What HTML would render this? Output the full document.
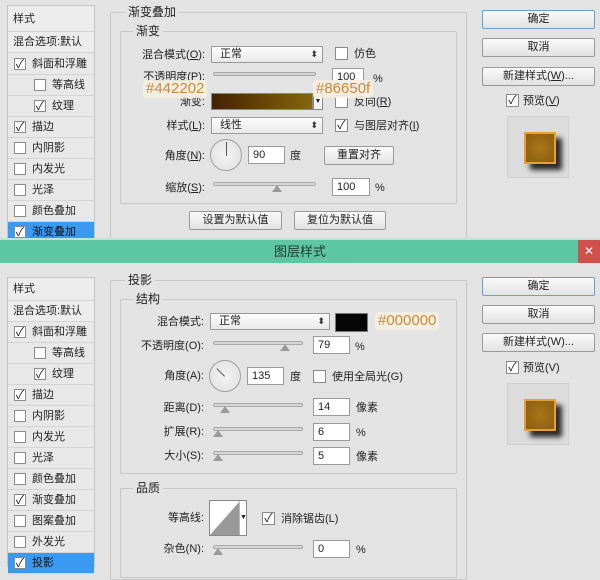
<!DOCTYPE html>
<html><head><meta charset="utf-8">
<style>
*{box-sizing:border-box;margin:0;padding:0}
body{width:600px;height:562px;overflow:hidden;background:#e3e3e3;font-family:"Liberation Sans","Noto Sans CJK SC",sans-serif;font-size:11px;color:#222;position:relative}
.a{position:absolute}
.list{position:absolute;left:7px;width:88px;background:#e8e8e8;border:1px solid #c4c4c4}
.it{position:absolute;left:0;width:86px;height:21px;line-height:21px;border-bottom:1px solid #d4d4d4;padding-left:24px;white-space:nowrap;font-size:11px}
.it.sub{padding-left:44px}
.it.hd{padding-left:5px;background:#ececec}
.it.sel{background:#3a99f0;color:#111}
.cb{position:absolute;width:12px;height:12px;border:1px solid #8a8a8a;background:#fff;top:4px;left:6px;font-size:12px;line-height:10px;text-align:center;color:#222}
.it.sub .cb{left:26px}
.fs{position:absolute;border:1px solid #c6c6c6;border-radius:2px}
.lg{position:absolute;background:#e3e3e3;padding:0 3px;font-size:12px;top:-8px;left:16px;line-height:14px}
.lbl{position:absolute;text-align:right;width:100px;font-size:11px;line-height:14px}
.sel2{position:absolute;height:17px;border:1px solid #9a9a9a;background:linear-gradient(#fdfdfd,#e8e8e8);padding-left:8px;line-height:15px;font-size:11px}
.sel2:after{content:"⬍";position:absolute;right:4px;top:0;font-size:9px;color:#333}
.inp{position:absolute;height:18px;border:1px solid #9a9a9a;background:#fff;padding-left:4px;line-height:16px;font-size:11px}
.sl{position:absolute;height:4px;border:1px solid #a8a8a8;border-radius:2px;background:#d6d6d6}
.th{position:absolute;top:2px;width:0;height:0;border-left:5px solid transparent;border-right:5px solid transparent;border-bottom:7px solid #999}
.btn{position:absolute;border:1px solid #9a9a9a;background:linear-gradient(#fafafa,#e2e2e2);text-align:center;font-size:11px;line-height:17px;border-radius:2px}
.ck{position:absolute;width:13px;height:13px;border:1px solid #8a8a8a;background:#fff;font-size:12px;line-height:11px;text-align:center}
.tx{position:absolute;font-size:11px;line-height:14px;white-space:nowrap}
.dial{position:absolute;width:32px;height:32px;border-radius:50%;border:1px solid #a0a0a0;background:radial-gradient(#f4f4f4,#dedede)}
.tag{position:absolute;background:rgba(245,238,225,.9);color:#c98a3a;font-size:15px;line-height:18px;padding:0 3px;border-radius:3px}
.prev{position:absolute;width:62px;height:62px;border:1px solid #cfcfcf;background:#dcdcdc}
.sq{position:absolute;left:16px;top:15px;width:32px;height:32px;background:radial-gradient(#a8761a,#8a5d0f);border:2px solid #e9a030;box-shadow:6px 6px 5px #2a2a2a}
</style></head><body>

<!-- TOP PANEL -->
<div class="list" style="top:5px;height:233px">
 <div class="it hd" style="top:0;height:26px;line-height:26px">样式</div>
 <div class="it hd" style="top:26px">混合选项:默认</div>
 <div class="it" style="top:48px"><span class="cb">✓</span>斜面和浮雕</div>
 <div class="it sub" style="top:69px"><span class="cb"></span>等高线</div>
 <div class="it sub" style="top:90px"><span class="cb">✓</span>纹理</div>
 <div class="it" style="top:111px"><span class="cb">✓</span>描边</div>
 <div class="it" style="top:132px"><span class="cb"></span>内阴影</div>
 <div class="it" style="top:153px"><span class="cb"></span>内发光</div>
 <div class="it" style="top:174px"><span class="cb"></span>光泽</div>
 <div class="it" style="top:195px"><span class="cb"></span>颜色叠加</div>
 <div class="it sel" style="top:216px"><span class="cb">✓</span>渐变叠加</div>
</div>

<div class="fs" style="left:110px;top:12px;width:357px;height:240px"><span class="lg" style="left:14px">渐变叠加</span></div>
<div class="fs" style="left:120px;top:31px;width:337px;height:173px"><span class="lg" style="left:12px">渐变</span></div>

<div class="lbl" style="left:105px;top:48px">混合模式(<u>O</u>):</div>
<div class="sel2" style="left:211px;top:46px;width:112px">正常</div>
<div class="ck" style="left:335px;top:47px"></div><div class="tx" style="left:354px;top:47px">仿色</div>

<div class="lbl" style="left:105px;top:70px">不透明度(P):</div>
<div class="sl" style="left:213px;top:72px;width:103px"></div>
<div class="inp" style="left:332px;top:68px;width:32px">100</div><div class="tx" style="left:373px;top:72px">%</div>

<div class="lbl" style="left:105px;top:95px">渐变:</div>
<div class="a" style="left:211px;top:93px;width:102px;height:17px;border:1px solid #888;background:linear-gradient(90deg,#442202,#86650f)"></div>
<div class="a" style="left:313px;top:93px;width:10px;height:17px;border:1px solid #888;background:#f5f5f5;font-size:7px;text-align:center;line-height:15px">▼</div>
<div class="ck" style="left:335px;top:95px"></div><div class="tx" style="left:354px;top:95px">反向(<u>R</u>)</div>
<div class="tag" style="left:143px;top:80px">#442202</div>
<div class="tag" style="left:313px;top:80px">#86650f</div>

<div class="lbl" style="left:105px;top:119px">样式(<u>L</u>):</div>
<div class="sel2" style="left:211px;top:117px;width:112px">线性</div>
<div class="ck" style="left:335px;top:119px">✓</div><div class="tx" style="left:354px;top:119px">与图层对齐(<u>I</u>)</div>

<div class="lbl" style="left:105px;top:149px">角度(<u>N</u>):</div>
<div class="dial" style="left:210px;top:139px"><div class="a" style="left:15px;top:2px;width:1px;height:14px;background:#555"></div></div>
<div class="inp" style="left:248px;top:146px;width:37px">90</div><div class="tx" style="left:290px;top:149px">度</div>
<div class="btn" style="left:324px;top:146px;width:70px;height:19px">重置对齐</div>

<div class="lbl" style="left:105px;top:181px">缩放(<u>S</u>):</div>
<div class="sl" style="left:213px;top:182px;width:103px"><div class="th" style="left:58px"></div></div>
<div class="inp" style="left:332px;top:178px;width:38px">100</div><div class="tx" style="left:375px;top:181px">%</div>

<div class="btn" style="left:189px;top:211px;width:93px;height:19px">设置为默认值</div>
<div class="btn" style="left:294px;top:211px;width:92px;height:19px">复位为默认值</div>

<div class="btn" style="left:482px;top:10px;width:113px;height:19px;border-color:#6a9ed8">确定</div>
<div class="btn" style="left:482px;top:38px;width:113px;height:19px">取消</div>
<div class="btn" style="left:482px;top:67px;width:113px;height:19px">新建样式(<u>W</u>)...</div>
<div class="ck" style="left:506px;top:94px">✓</div><div class="tx" style="left:523px;top:94px">预览(<u>V</u>)</div>
<div class="prev" style="left:507px;top:116px"><div class="sq"></div></div>

<!-- TITLE BAR -->
<div class="a" style="left:0;top:238px;width:600px;height:2px;background:#bfe3d5"></div>
<div class="a" style="left:0;top:240px;width:600px;height:23px;background:#5cc7a2;text-align:center;font-size:13px;line-height:23px;color:#1a3a30">图层样式</div>
<div class="a" style="left:578px;top:240px;width:22px;height:23px;background:#d2504b;color:#fff;text-align:center;line-height:23px;font-size:12px">✕</div>

<!-- BOTTOM PANEL -->
<div class="list" style="top:277px;height:290px">
 <div class="it hd" style="top:0;height:23px;line-height:23px">样式</div>
 <div class="it hd" style="top:23px">混合选项:默认</div>
 <div class="it" style="top:44px"><span class="cb">✓</span>斜面和浮雕</div>
 <div class="it sub" style="top:65px"><span class="cb"></span>等高线</div>
 <div class="it sub" style="top:86px"><span class="cb">✓</span>纹理</div>
 <div class="it" style="top:107px"><span class="cb">✓</span>描边</div>
 <div class="it" style="top:128px"><span class="cb"></span>内阴影</div>
 <div class="it" style="top:149px"><span class="cb"></span>内发光</div>
 <div class="it" style="top:170px"><span class="cb"></span>光泽</div>
 <div class="it" style="top:191px"><span class="cb"></span>颜色叠加</div>
 <div class="it" style="top:212px"><span class="cb">✓</span>渐变叠加</div>
 <div class="it" style="top:233px"><span class="cb"></span>图案叠加</div>
 <div class="it" style="top:254px"><span class="cb"></span>外发光</div>
 <div class="it sel" style="top:275px"><span class="cb">✓</span>投影</div>
</div>

<div class="fs" style="left:110px;top:280px;width:357px;height:300px"><span class="lg" style="left:14px">投影</span></div>
<div class="fs" style="left:120px;top:299px;width:337px;height:175px"><span class="lg" style="left:12px">结构</span></div>

<div class="lbl" style="left:104px;top:315px">混合模式:</div>
<div class="sel2" style="left:210px;top:313px;width:120px">正常</div>
<div class="a" style="left:335px;top:313px;width:33px;height:19px;background:#050505;border:1px solid #777"></div>
<div class="tag" style="left:375px;top:312px">#000000</div>

<div class="lbl" style="left:104px;top:339px">不透明度(O):</div>
<div class="sl" style="left:213px;top:341px;width:90px"><div class="th" style="left:66px"></div></div>
<div class="inp" style="left:313px;top:336px;width:37px">79</div><div class="tx" style="left:355px;top:340px">%</div>

<div class="lbl" style="left:104px;top:369px">角度(A):</div>
<div class="dial" style="left:209px;top:360px"><div class="a" style="left:5px;top:8px;width:11px;height:1px;background:#555;transform:rotate(45deg);transform-origin:100% 0;left:4px;top:15px"></div></div>
<div class="inp" style="left:247px;top:367px;width:37px">135</div><div class="tx" style="left:290px;top:370px">度</div>
<div class="ck" style="left:313px;top:370px"></div><div class="tx" style="left:332px;top:370px">使用全局光(G)</div>

<div class="lbl" style="left:104px;top:401px">距离(D):</div>
<div class="sl" style="left:213px;top:403px;width:90px"><div class="th" style="left:6px"></div></div>
<div class="inp" style="left:313px;top:398px;width:37px">14</div><div class="tx" style="left:356px;top:401px">像素</div>

<div class="lbl" style="left:104px;top:425px">扩展(R):</div>
<div class="sl" style="left:213px;top:427px;width:90px"><div class="th" style="left:-1px"></div></div>
<div class="inp" style="left:313px;top:423px;width:37px">6</div><div class="tx" style="left:356px;top:426px">%</div>

<div class="lbl" style="left:104px;top:449px">大小(S):</div>
<div class="sl" style="left:213px;top:451px;width:90px"><div class="th" style="left:-1px"></div></div>
<div class="inp" style="left:313px;top:447px;width:37px">5</div><div class="tx" style="left:356px;top:450px">像素</div>

<div class="fs" style="left:120px;top:488px;width:337px;height:90px"><span class="lg" style="left:12px">品质</span></div>
<div class="lbl" style="left:104px;top:511px">等高线:</div>
<div class="a" style="left:209px;top:500px;width:38px;height:36px;border:1px solid #888;background:#fff">
 <svg width="30" height="34" style="position:absolute;left:0;top:0"><polygon points="0,34 30,0 30,34" fill="#999"/></svg>
 <div class="a" style="left:29px;top:0;width:8px;height:34px;border-left:1px solid #bbb;font-size:7px;line-height:34px;text-align:center">▼</div>
</div>
<div class="ck" style="left:262px;top:512px">✓</div><div class="tx" style="left:281px;top:512px">消除锯齿(L)</div>

<div class="lbl" style="left:104px;top:542px">杂色(N):</div>
<div class="sl" style="left:213px;top:545px;width:90px"><div class="th" style="left:-1px"></div></div>
<div class="inp" style="left:313px;top:540px;width:37px">0</div><div class="tx" style="left:356px;top:543px">%</div>

<div class="btn" style="left:482px;top:277px;width:113px;height:19px;border-color:#6a9ed8">确定</div>
<div class="btn" style="left:482px;top:305px;width:113px;height:19px">取消</div>
<div class="btn" style="left:482px;top:333px;width:113px;height:19px">新建样式(W)...</div>
<div class="ck" style="left:506px;top:361px">✓</div><div class="tx" style="left:523px;top:361px">预览(V)</div>
<div class="prev" style="left:507px;top:383px"><div class="sq"></div></div>
</body></html>
